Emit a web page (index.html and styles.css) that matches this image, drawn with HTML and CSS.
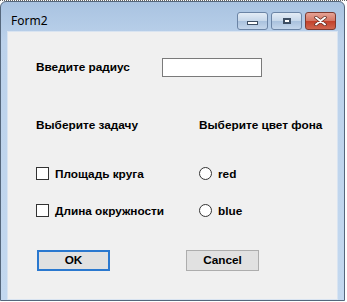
FILE: index.html
```html
<!DOCTYPE html>
<html lang="ru">
<head>
    <meta charset="UTF-8">
    <title>Form2</title>
    <link rel="stylesheet" href="styles.css">
</head>
<body>
    <div class="window">
        <div class="titlebar">
            <span class="title">Form2</span>
            <div class="caption-buttons">
                <span class="cap-btn"><span class="min-glyph"></span></span>
                <span class="cap-btn"><span class="max-glyph"></span></span>
                <span class="cap-btn close">
                    <svg width="13" height="10" viewBox="0 0 13 10">
                        <path d="M2 1.5 L11 8.5 M11 1.5 L2 8.5" stroke="#5a2a22" stroke-width="3.4" stroke-linecap="round"/>
                        <path d="M2 1.5 L11 8.5 M11 1.5 L2 8.5" stroke="#fff" stroke-width="2" stroke-linecap="round"/>
                    </svg>
                </span>
            </div>
        </div>
        <div class="client">
            <div class="radius-row">
                <label class="label radius-label" for="radius">Введите радиус</label>
                <input type="text" id="radius" class="textbox">
            </div>
            <div class="grid headings">
                <span class="label">Выберите задачу</span>
                <span class="label">Выберите цвет фона</span>
            </div>
            <div class="grid options">
                <span class="option"><span class="check"></span><span class="label">Площадь круга</span></span>
                <span class="option"><span class="radio"></span><span class="label">red</span></span>
                <span class="option"><span class="check"></span><span class="label">Длина окружности</span></span>
                <span class="option"><span class="radio"></span><span class="label">blue</span></span>
            </div>
            <div class="buttons">
                <button class="btn default">OK</button>
                <button class="btn">Cancel</button>
            </div>
        </div>
    </div>
</body>
</html>
```

FILE: styles.css
```css
body {
    margin: 0;
    background: #fff;
    font-family: "Liberation Sans", Arial, sans-serif;
    border-top: 1px dotted #666;
}
.window {
    width: 343px;
    height: 298px;
    border: 1px solid #55677c;
    border-radius: 6px 6px 0 0;
    background: linear-gradient(#a9c3e1, #bcd2eb 40px, #c3d8ef);
    display: flex;
    flex-direction: column;
}
.titlebar {
    height: 31px;
    display: flex;
    align-items: center;
    justify-content: space-between;
    padding: 0 8px 0 10px;
}
.title {
    font-family: "Noto Sans", sans-serif;
    font-size: 12px;
    color: #000;
    margin-top: 8px;
}
.caption-buttons {
    display: flex;
    gap: 3px;
    margin-top: 10px;
}
.cap-btn {
    width: 29px;
    height: 16px;
    border: 1px solid #6b84a5;
    border-radius: 3px;
    background: linear-gradient(#e3ecf6, #c6d7ea 50%, #a9c1dd 51%, #c4d6eb);
    display: flex;
    align-items: center;
    justify-content: center;
}
.cap-btn.close {
    border-color: #7d3a30;
    background: linear-gradient(#e6a396, #d47563 50%, #c2402a 51%, #d0664f);
}
.min-glyph {
    width: 9px;
    height: 2px;
    margin-top: 4px;
    background: #fff;
    border: 1px solid #3d4e63;
}
.max-glyph {
    width: 6px;
    height: 4px;
    background: #fff;
    border: 1px solid #3d4e63;
    box-shadow: inset 0 0 0 1px #3d4e63;
}
.client {
    margin: 0 6px 0 6px;
    height: 258px;
    background: #f0f0f0;
    border: 1px solid #d9e4f1;
    padding: 26px 0 0 28px;
}
.label {
    font-size: 11.8px;
    font-weight: bold;
    color: #000;
}
.radius-row {
    display: flex;
    align-items: center;
    height: 19px;
}
.radius-label {
    width: 126px;
}
.textbox {
    width: 100px;
    height: 19px;
    box-sizing: border-box;
    border: 1px solid #7a7a7a;
    background: #fff;
    margin: 0;
    padding: 0;
}
.grid {
    display: grid;
    grid-template-columns: 163px auto;
}
.headings {
    margin-top: 40px;
    height: 16px;
    align-items: center;
}
.options {
    margin-top: 33px;
    grid-auto-rows: 16px;
    row-gap: 21px;
}
.option {
    display: flex;
    align-items: center;
    gap: 6px;
}
.check {
    width: 11px;
    height: 11px;
    border: 1px solid #333;
    background: #fff;
}
.radio {
    width: 11px;
    height: 11px;
    border: 1px solid #333;
    border-radius: 50%;
    background: #fff;
}
.buttons {
    display: flex;
    gap: 76px;
    margin-top: 31px;
    padding-left: 1px;
}
.btn {
    width: 73px;
    height: 21px;
    box-sizing: border-box;
    border: 1px solid #adadad;
    background: #e1e1e1;
    font-family: "Liberation Sans", Arial, sans-serif;
    font-size: 11.8px;
    font-weight: bold;
    color: #000;
    padding: 0;
}
.btn.default {
    border: 2px solid #2a78cf;
}
```
